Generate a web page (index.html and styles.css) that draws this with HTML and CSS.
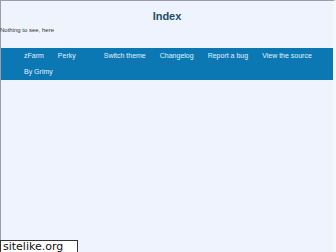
FILE: index.html
```html
<!DOCTYPE html>
<html lang="en">
<head>
    <meta charset="UTF-8">
    <title>Index</title>
    <link rel="stylesheet" href="styles.css">
</head>
<body>
<div class="page">
    <h1 class="title">Index</h1>
    <p class="note">Nothing to see, here</p>
    <ul class="nav">
        <li><a href="#">zFarm</a></li>
        <li><a href="#">Perky</a></li>
        <li><a href="#"></a></li>
        <li><a href="#">Switch theme</a></li>
        <li><a href="#">Changelog</a></li>
        <li><a href="#">Report a bug</a></li>
        <li><a href="#">View the source</a></li>
        <li><a href="#">By Grimy</a></li>
    </ul>
</div>
<div class="stamp">sitelike.org</div>
</body>
</html>
```

FILE: styles.css
```css
* {
    padding: 0;
    margin: 0;
    list-style: none;
    border: 0;
}

html, body {
    height: 100%;
}

body {
    background: #eef3fd;
    font-family: "Liberation Sans", Arial, sans-serif;
    overflow: hidden;
}

.page {
    height: 100%;
    box-sizing: border-box;
    border-top: 1px solid #9a9ea6;
    border-left: 1px solid #9a9ea6;
    border-right: 3px solid #f4f7fe;
}

.title {
    margin-top: 8px;
    font-size: 11px;
    line-height: 14px;
    text-align: center;
    color: #234e68;
}

.note {
    margin-top: 3px;
    margin-left: -1px;
    font-size: 6px;
    line-height: 8px;
    color: #2b3440;
}

.nav {
    margin-top: 14px;
    padding: 0 14px 0 16px;
    display: flex;
    flex-wrap: wrap;
    background: #0b78b4;
    font-size: 7px;
}

.nav li {
    padding: 0 7px;
    height: 16px;
    line-height: 16px;
}

.nav a {
    color: #e6efff;
    text-decoration: none;
}

.stamp {
    position: absolute;
    left: 0;
    top: 240px;
    width: 74px;
    height: 14px;
    padding-left: 2px;
    background: #fff;
    border: 1px solid #333;
    font-family: "DejaVu Sans", sans-serif;
    font-size: 11px;
    line-height: 12px;
    color: #111;
}
```
